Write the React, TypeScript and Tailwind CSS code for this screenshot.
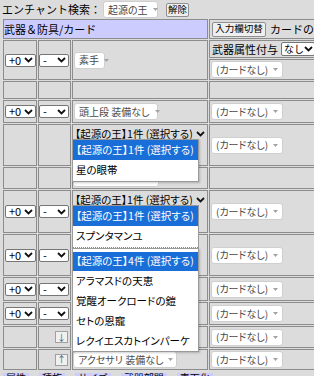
import React from 'react'

function Chevron() {
  return (
    <svg width="9" height="6" viewBox="0 0 9 6" className="shrink-0">
      <path d="M1 1l3.5 3.5L8 1" fill="none" stroke="#111" strokeWidth="1.8" />
    </svg>
  )
}

function Caret() {
  return (
    <svg width="5" height="3" viewBox="0 0 5 3" className="shrink-0">
      <path d="M0 0h5L2.5 3z" fill="#a3a3a3" />
    </svg>
  )
}

function NumSelect({ value, className = '' }: { value: string; className?: string }) {
  return (
    <div
      className={`flex h-[13px] items-center justify-between rounded-[2px] border border-[#767676] bg-white pl-[3px] pr-[2px] text-[11px] leading-none ${className}`}
    >
      <span>{value}</span>
      <Chevron />
    </div>
  )
}

function Pill({ text, className = '' }: { text: string; className?: string }) {
  return (
    <div
      className={`flex h-[17px] items-center gap-[5px] rounded-[3px] border border-[#cfcfcf] bg-white pl-[4px] text-[10px] leading-none text-[#4a4a4a] [font-feature-settings:'palt'] ${className}`}
    >
      <span className="whitespace-nowrap">{text}</span>
      <Caret />
    </div>
  )
}

function Cell({ className = '', children }: { className?: string; children?: React.ReactNode }) {
  return <div className={`flex border border-[#8c8c8c] ${className}`}>{children}</div>
}

function CardCell() {
  return (
    <Cell className="items-center pl-[1px]">
      <Pill text="(カードなし)" className="w-[72px]" />
    </Cell>
  )
}

function LevelCells() {
  return (
    <>
      <Cell className="items-center pl-[1px]">
        <NumSelect value="+0" className="w-[31px]" />
      </Cell>
      <Cell className="items-center">
        <NumSelect value="-" className="w-[30px]" />
      </Cell>
    </>
  )
}

function OpenSelect() {
  return (
    <div className="flex h-[16px] items-center gap-[3px] pl-[2px] text-[10.5px] leading-none [font-feature-settings:'palt']">
      <span className="whitespace-nowrap">【起源の王】1件 (選択する)</span>
      <Chevron />
    </div>
  )
}

function Option({ text, active, h }: { text: string; active?: boolean; h: string }) {
  return (
    <div
      className={`flex ${h} items-center whitespace-nowrap pl-[3px] text-[10.5px] leading-none [font-feature-settings:'palt'] ${
        active ? 'bg-[#1a6ed8] text-white' : 'text-black'
      }`}
    >
      {text}
    </div>
  )
}

export default function App() {
  return (
    <div className="relative h-[376px] w-[314px] overflow-hidden bg-[#dcdcdc] text-black [font-family:'Noto_Sans_CJK_JP',sans-serif]">
      <div className="flex h-[19px] items-center pl-[2px]">
        <span className="text-[11px] leading-none">エンチャント検索：</span>
        <Pill text="起源の王" className="ml-[2px] h-[15px] w-[55px] text-[#444]" />
        <button className="ml-[8px] h-[14px] w-[23px] rounded-[2px] border border-[#8f8f8f] bg-[#efefef] text-[9.5px] leading-none">
          解除
        </button>
      </div>

      <div className="grid grid-cols-[34px_33px_136px_160px] grid-rows-[20px_40px_18px_23px_42px_22px_43px_42px_24px_23px_22px_21px_20px] gap-[1px] pl-[3px]">
        {/* header */}
        <Cell className="col-span-3 items-center bg-[#ccccff] text-[11px] leading-none">武器＆防具/カード</Cell>
        <Cell className="items-center pl-[2px]">
          <button className="h-[15px] w-[54px] shrink-0 rounded-[2px] border border-[#8f8f8f] bg-[#efefef] text-[9.5px] leading-none">
            入力欄切替
          </button>
          <span className="ml-[4px] whitespace-nowrap text-[11px] leading-none">カードの</span>
        </Cell>

        {/* weapon */}
        <LevelCells />
        <Cell className="items-center pl-[1px]">
          <Pill text="素手" className="w-[31px]" />
        </Cell>
        <div className="flex flex-col gap-[1px]">
          <Cell className="h-[18px] items-center pl-[2px] text-[11px] leading-none">
            <span className="whitespace-nowrap">武器属性付与</span>
            <div className="ml-[3px] flex h-[14px] w-[34px] items-center justify-between rounded-[2px] border border-[#767676] bg-white pl-[2px] pr-[1px] text-[10px]">
              <span>なし</span>
              <Chevron />
            </div>
          </Cell>
          <Cell className="h-[21px] items-center pl-[1px]">
            <Pill text="(カードなし)" className="w-[72px]" />
          </Cell>
        </div>

        {/* empty */}
        <Cell />
        <Cell />
        <Cell />
        <Cell />

        {/* head top */}
        <LevelCells />
        <Cell className="items-center pl-[1px]">
          <Pill text="頭上段 装備なし" className="w-[84px]" />
        </Cell>
        <CardCell />

        {/* enchant 1 */}
        <Cell />
        <Cell />
        <Cell className="items-start pt-[1px]">
          <OpenSelect />
        </Cell>
        <CardCell />

        {/* row under the first list */}
        <Cell />
        <Cell />
        <Cell className="items-center">
          <div className="h-[17px] w-[86px] rounded-[3px] border border-[#cfcfcf] bg-white" />
        </Cell>
        <Cell />

        {/* enchant 2 */}
        <LevelCells />
        <Cell className="items-start pt-[1px]">
          <OpenSelect />
        </Cell>
        <CardCell />

        <LevelCells />
        <Cell />
        <CardCell />

        <LevelCells />
        <Cell />
        <CardCell />

        <LevelCells />
        <Cell />
        <CardCell />

        <Cell />
        <Cell className="items-center justify-end pr-[2px]">
          <button className="flex h-[12px] w-[13px] items-center justify-center border border-[#a0a0a0] bg-[#f0f0f0] text-[9px] leading-none text-[#3b5b8a]">
            ↓
          </button>
        </Cell>
        <Cell />
        <CardCell />

        <Cell />
        <Cell className="items-center justify-end pr-[2px]">
          <button className="flex h-[12px] w-[13px] items-center justify-center border border-[#a0a0a0] bg-[#f0f0f0] text-[9px] leading-none text-[#3b5b8a]">
            ↑
          </button>
        </Cell>
        <Cell className="items-center">
          <Pill text="アクセサリ 装備なし" className="w-[104px]" />
        </Cell>
        <CardCell />

        <div className="col-span-4 flex items-start gap-[10px] pt-[2px] text-[10px] leading-none">
          <span className="bg-[#ccccff] px-[3px]">属性</span>
          <span className="bg-[#ccccff] px-[3px]">種族</span>
          <span className="bg-[#ccccff] px-[3px]">サイズ</span>
          <span className="bg-[#ccccff] px-[3px]">武器部門</span>
          <span className="bg-[#ccccff] px-[3px]">表面化</span>
        </div>
      </div>

      {/* open dropdowns */}
      <div className="absolute left-[72px] top-[139px] w-[127px] border border-[#9a9a9a] bg-white shadow-[1px_1px_2px_rgba(0,0,0,0.2)]">
        <Option text="【起源の王】1件 (選択する)" active h="h-[20px]" />
        <Option text="星の眼帯" h="h-[21px]" />
      </div>
      <div className="absolute left-[72px] top-[205px] z-10 w-[127px] border border-[#9a9a9a] bg-white">
        <Option text="【起源の王】1件 (選択する)" active h="h-[20px]" />
        <Option text="スプンタマンユ" h="h-[21px]" />
        <div className="border-t border-dotted border-[#8a8a8a]" />
      </div>
      <div className="absolute left-[72px] top-[248px] w-[127px] border border-[#9a9a9a] bg-white pt-[3px] shadow-[1px_1px_2px_rgba(0,0,0,0.2)]">
        <Option text="【起源の王】4件 (選択する)" active h="h-[19px]" />
        <Option text="アラマスドの天恵" h="h-[20px]" />
        <Option text="覚醒オークロードの鎧" h="h-[20px]" />
        <Option text="セトの恩寵" h="h-[20px]" />
        <Option text="レクイエスカトインパーケ" h="h-[20px]" />
      </div>
    </div>
  )
}
